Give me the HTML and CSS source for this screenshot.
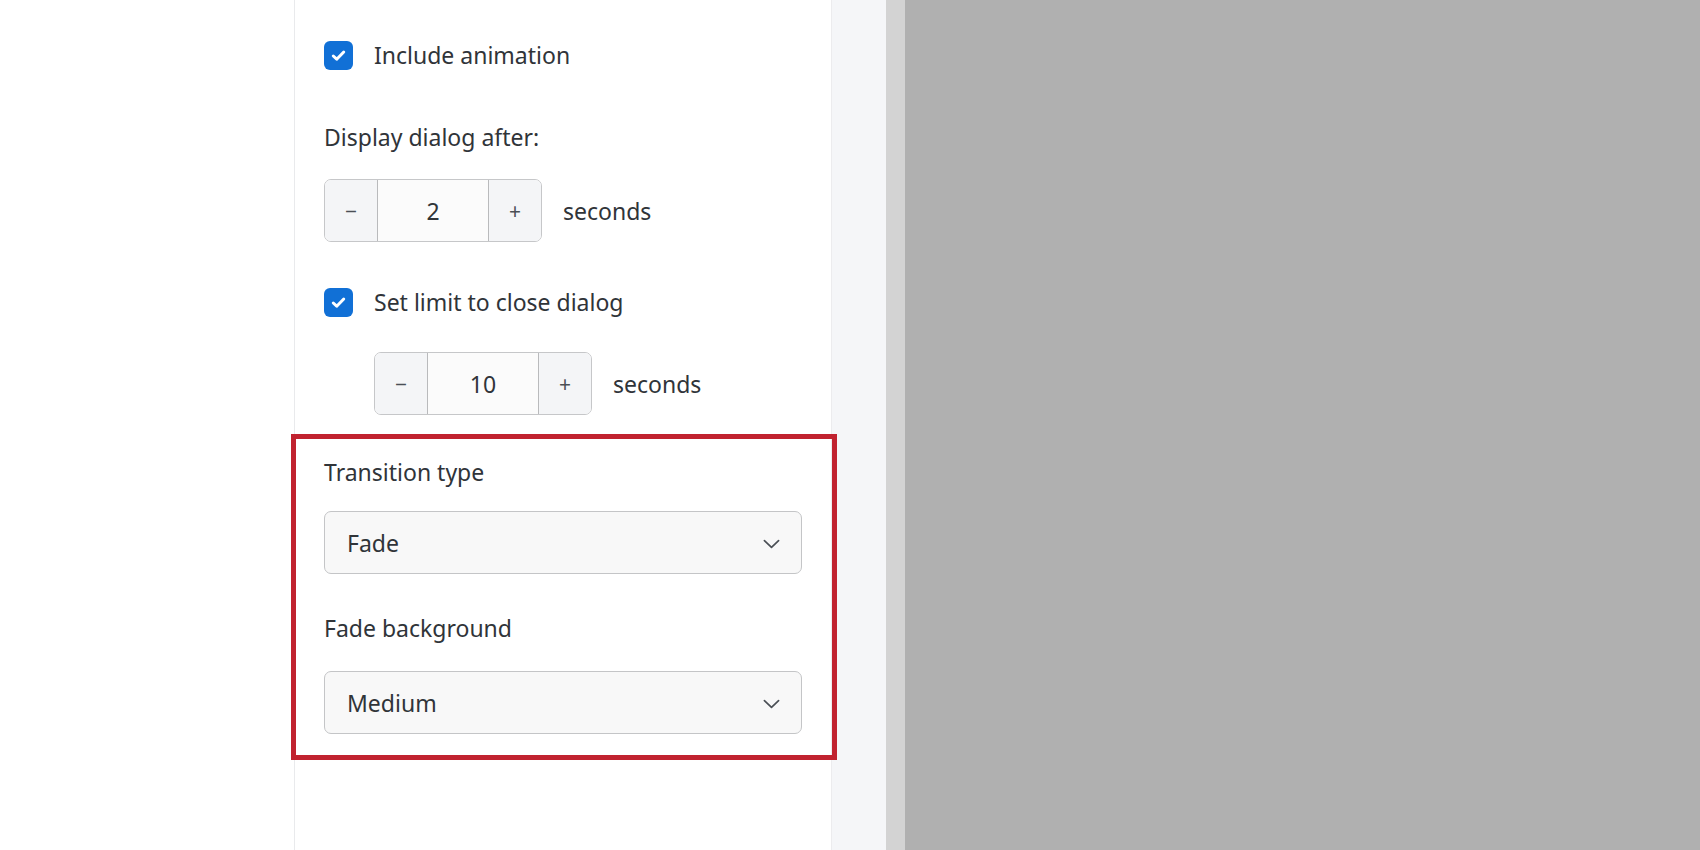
FILE: index.html
```html
<!DOCTYPE html>
<html lang="en">
<head>
    <meta charset="UTF-8">
    <meta name="viewport" content="width=device-width, initial-scale=1.0">
    <title>Dialog Options</title>
    <link rel="stylesheet" href="styles.css">
</head>
<body>
    <div class="sidebar"></div>

    <div class="panel">
        <label class="check-row">
            <span class="checkbox">
                <svg viewBox="0 0 16 16" width="19" height="19"><path d="M3.6 8.4l2.9 2.7 5.9-6" fill="none" stroke="#fff" stroke-width="2.5" stroke-linecap="round" stroke-linejoin="round"/></svg>
            </span>
            <span>Include animation</span>
        </label>

        <div class="field-label label-display">Display dialog after:</div>

        <div class="stepper-row">
            <div class="stepper">
                <button class="step-btn">&minus;</button>
                <div class="step-value">2</div>
                <button class="step-btn">+</button>
            </div>
            <span class="unit">seconds</span>
        </div>

        <label class="check-row check-limit">
            <span class="checkbox">
                <svg viewBox="0 0 16 16" width="19" height="19"><path d="M3.6 8.4l2.9 2.7 5.9-6" fill="none" stroke="#fff" stroke-width="2.5" stroke-linecap="round" stroke-linejoin="round"/></svg>
            </span>
            <span>Set limit to close dialog</span>
        </label>

        <div class="stepper-row indented">
            <div class="stepper">
                <button class="step-btn">&minus;</button>
                <div class="step-value">10</div>
                <button class="step-btn">+</button>
            </div>
            <span class="unit">seconds</span>
        </div>

        <div class="field-label label-transition">Transition type</div>
        <div class="select">
            <span>Fade</span>
            <svg class="chevron" viewBox="0 0 18 10" width="17" height="10"><path d="M1.5 1.5l7.5 7 7.5-7" fill="none" stroke="#4a4f55" stroke-width="1.8" stroke-linecap="round" stroke-linejoin="round"/></svg>
        </div>

        <div class="field-label label-fade">Fade background</div>
        <div class="select select-fade">
            <span>Medium</span>
            <svg class="chevron" viewBox="0 0 18 10" width="17" height="10"><path d="M1.5 1.5l7.5 7 7.5-7" fill="none" stroke="#4a4f55" stroke-width="1.8" stroke-linecap="round" stroke-linejoin="round"/></svg>
        </div>
    </div>

    <div class="gutter"></div>
    <div class="edge"></div>
    <div class="backdrop"></div>

    <!-- annotation box drawn over the panel -->
    <div class="highlight"></div>
</body>
</html>
```

FILE: styles.css
```css
* {
    margin: 0;
    padding: 0;
    box-sizing: border-box;
}

body {
    font-family: "Noto Sans", "Open Sans", sans-serif;
    font-size: 23px;
    color: #303439;
    background: #b0b0b0;
    display: flex;
    height: 850px;
    overflow: hidden;
    position: relative;
}

.sidebar {
    width: 295px;
    background: #fff;
    border-right: 1px solid #e9eaec;
}

.panel {
    width: 536px;
    background: #fff;
    padding: 41px 29px 0;
}

.check-row {
    display: flex;
    align-items: center;
    gap: 21px;
    height: 29px;
    line-height: 29px;
}

.checkbox {
    width: 29px;
    height: 29px;
    border-radius: 6px;
    background: #1170d6;
    display: flex;
    align-items: center;
    justify-content: center;
    flex-shrink: 0;
}

.field-label {
    line-height: 28px;
}

.label-display {
    margin-top: 53px;
}

.stepper-row {
    display: flex;
    align-items: center;
    gap: 21px;
    margin-top: 28px;
}

.stepper-row.indented {
    margin-top: 35px;
    margin-left: 50px;
}

.stepper {
    display: flex;
    width: 218px;
    height: 63px;
    border: 1px solid #c6c7c9;
    border-radius: 7px;
    overflow: hidden;
}

.step-btn {
    width: 52px;
    border: none;
    background: #f4f5f7;
    font-family: inherit;
    font-size: 21px;
    color: #4a4f55;
}

.step-value {
    flex: 1;
    display: flex;
    align-items: center;
    justify-content: center;
    background: #fbfbfb;
    border-left: 1px solid #b9babc;
    border-right: 1px solid #b9babc;
}

.check-limit {
    margin-top: 46px;
}

.label-transition {
    margin-top: 43px;
}

.select {
    display: flex;
    align-items: center;
    justify-content: space-between;
    width: 478px;
    height: 63px;
    margin-top: 25px;
    padding: 0 21px 0 22px;
    background: #f8f8f8;
    border: 1px solid #c4c5c7;
    border-radius: 7px;
}

.chevron {
    margin-top: 2px;
}

.label-fade {
    margin-top: 40px;
}

.select-fade {
    margin-top: 29px;
}

.gutter {
    width: 55px;
    background: #f5f6f8;
    border-left: 1px solid #ececee;
}

.edge {
    width: 19px;
    background: #d3d3d3;
}

.backdrop {
    flex: 1;
    background: #b0b0b0;
}

.highlight {
    position: absolute;
    left: 291px;
    top: 434px;
    width: 546px;
    height: 326px;
    border: 5px solid #c1222f;
}
```
